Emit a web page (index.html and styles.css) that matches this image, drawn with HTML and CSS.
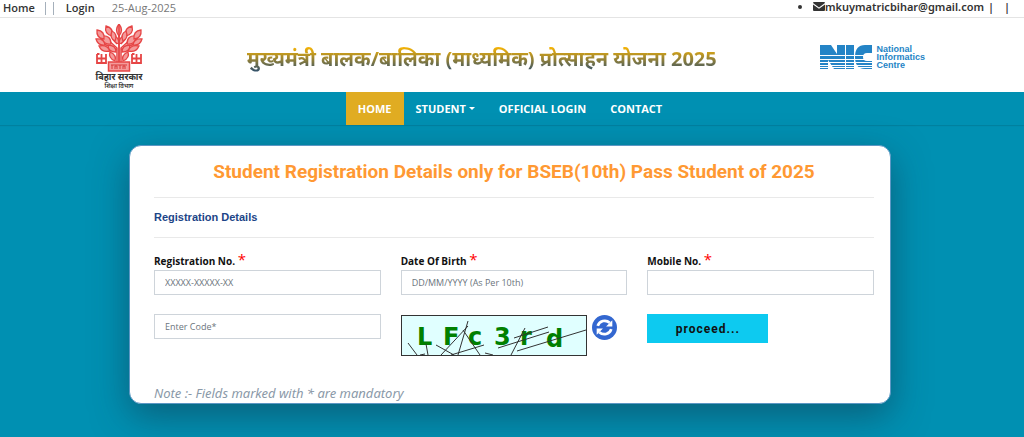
FILE: index.html
```html
<!DOCTYPE html>
<html lang="en">
<head>
    <meta charset="UTF-8">
    <meta name="viewport" content="width=device-width, initial-scale=1.0">
    <title>Student Registration</title>
    <link rel="stylesheet" href="styles.css">
</head>
<body>

    <div class="topbar">
        <div class="top-links">
            <a href="#">Home</a>
            <span class="bars"><i></i><i></i></span>
            <a href="#">Login</a>
            <span class="date">25-Aug-2025</span>
        </div>
        <ul class="top-contact">
            <li>
                <svg class="mail" viewBox="0 0 12 9" aria-hidden="true"><path d="M1 0h10a1 1 0 0 1 1 1L6 5.500 0 1a1 1 0 0 1 1-1z"/><path d="M0 2.400l6 4.300 6-4.300V8a1 1 0 0 1-1 1H1a1 1 0 0 1-1-1z"/></svg><a href="mailto:mkuymatricbihar@gmail.com">mkuymatricbihar@gmail.com</a>
                <span>|</span><span class="last-bar">|</span>
            </li>
        </ul>
    </div>

    <header class="header">
        <div class="emblem" lang="hi">
            <svg viewBox="0 0 48 48" aria-hidden="true">
                <g fill="none" stroke="#e64545" stroke-width="1.500">
                    <path d="M24 38V4M22 38V24L12 15M26 38V24l11-10M22 26L7 19M26 26l15-7M22 20L15 9M26 20l7-12"/>
                </g>
                <g fill="#f49a9a" stroke="#e64545" stroke-width="1.300">
                    <path d="M24 12q-5-6 0-12q5 6 0 12zM24 20q-7-2-6-9q6 2 6 9zM24 20q7-2 6-9q-6 2-6 9z"/>
                    <path d="M17 12q-8-2-6-10q8 2 6 10zM31 12q8-2 6-10q-8 2-6 10zM16 20q-9 1-9-8q9-1 9 8zM32 20q9 1 9-8q-9-1-9 8z"/>
                    <path d="M9 15q-8-1-7-9q8 1 7 9zM39 15q8-1 7-9q-8 1-7 9zM10 21q-7 1-9-6q8-1 9 6zM38 21q7 1 9-6q-8-1-9 6z"/>
                    <path d="M15 27q-8 2-11-5q8-2 11 5zM33 27q8 2 11-5q-8-2-11 5zM20 17q-6-3-3-10q6 3 3 10zM28 17q6-3 3-10q-6 3-3 10z"/>
                    <path d="M21 28q-8 0-8-7q8 0 8 7zM27 28q8 0 8-7q-8 0-8 7zM20 37q-7-3-5-9q7 3 5 9zM28 37q7-3 5-9q-7 3-5 9z"/>
                </g>
                <path d="M24 2v36" stroke="#e64545" stroke-width="1.500"/>
                <path d="M2 30v9h9v-9M2 34.500h9M6.500 30v9M2 30h2.500M8.500 39H11M37 30v9h9v-9M37 34.500h9M41.500 30v9M37 30h2.500M43.500 39H46" fill="none" stroke="#e64545" stroke-width="1.800"/>
                <rect x="13.500" y="38" width="21" height="9" fill="#f49a9a" stroke="#e64545" stroke-width="1.500"/>
                <path d="M16 41h16M17 45v-4M20 45v-3h2v3M25 45v-4M28 45v-3h2v3" fill="none" stroke="#d83838"/>
            </svg>
            <strong>बिहार सरकार</strong>
            <small>शिक्षा विभाग</small>
        </div>
        <h1 lang="hi">मुख्यमंत्री बालक/बालिका (माध्यमिक) प्रोत्साहन योजना 2025</h1>
        <div class="nic">
            <svg viewBox="0 0 52 24" aria-hidden="true">
                <defs>
                    <clipPath id="nicShape">
                        <path d="M0 0h11l6 9V0h8v24H14L8 15v9H0zM26 0h8v24h-8zM52 0v8h-5q-4 0-4 4t4 4h5v8h-7q-10 0-10-12T45 0z"/>
                    </clipPath>
                </defs>
                <g clip-path="url(#nicShape)" fill="#2484c6">
                    <path d="M0 0h52v10H0zM0 11h52v3H0zM0 15h52v2H0zM0 18h52v2H0zM0 21h52v1H0zM0 23h52v1H0z"/>
                </g>
            </svg>
            <span>National<br>Informatics<br>Centre</span>
        </div>
    </header>

    <nav class="navbar">
        <a class="active" href="#">HOME</a>
        <a class="dropdown" href="#">STUDENT</a>
        <a href="#">OFFICIAL LOGIN</a>
        <a href="#">CONTACT</a>
    </nav>

    <main>
        <form class="card">
            <h2>Student Registration Details only for BSEB(10th) Pass Student of 2025</h2>
            <h3>Registration Details</h3>
            <div class="fields">
                <div>
                    <label for="regNo">Registration No. <b>*</b></label>
                    <input id="regNo" type="text" placeholder="XXXXX-XXXXX-XX">
                </div>
                <div>
                    <label for="dob">Date Of Birth <b>*</b></label>
                    <input id="dob" type="text" placeholder="DD/MM/YYYY (As Per 10th)">
                </div>
                <div>
                    <label for="mobile">Mobile No. <b>*</b></label>
                    <input id="mobile" type="text">
                </div>
                <div>
                    <input type="text" placeholder="Enter Code*" aria-label="Enter Code">
                </div>
                <div class="captcha">
                    <svg class="code" viewBox="0 0 184 39">
                        <g class="letters">
                            <text x="15" y="29">L</text>
                            <text x="41" y="29">F</text>
                            <text x="66" y="29">c</text>
                            <text x="92" y="29">3</text>
                            <text x="118" y="29">r</text>
                            <text x="144" y="31">d</text>
                        </g>
                        <g stroke="#333" stroke-width="1" fill="none">
                            <path d="M6 27l9 12M24 28l2 11M34 29l18 10M39 39l27-29M66 5L56 39M61 14l17 25M49 39l33-10M96 32l51-16M123 12l-14 27M112 22l34-11M115 35l69-21M83 37l8 2M18 39l5-1"/>
                        </g>
                    </svg>
                    <button class="refresh" type="button" aria-label="Refresh code">
                        <svg viewBox="0 0 24 24" aria-hidden="true">
                            <circle cx="12" cy="12" r="12" fill="#3367d0"/>
                            <path d="M5.500 10.500A7 7 0 0 1 17 7.500M18.500 13.500A7 7 0 0 1 7 16.500" fill="none" stroke="#fff" stroke-width="2.600"/>
                            <path d="M19.500 5v6h-6zM4.500 19v-6h6z" fill="#fff"/>
                        </svg>
                    </button>
                </div>
                <div>
                    <button class="proceed" type="button">proceed...</button>
                </div>
            </div>
            <p class="note">Note :- Fields marked with * are mandatory</p>
        </form>
    </main>

</body>
</html>
```
FILE: styles.css
```css
* {
    box-sizing: border-box;
}

body {
    margin: 0;
    min-height: 100vh;
    background: #0090b2;
    font-family: 'Open Sans', 'Noto Sans', sans-serif;
    font-size: 11px;
    color: #333;
}

a { color: inherit; text-decoration: none; }

.topbar {
    display: flex;
    justify-content: space-between;
    height: 18px;
    padding: 0 14px 0 3px;
    background: #fff;
    border-bottom: 1px solid #e4e4e4;
    font-weight: 600;
    line-height: 16px;
}

.top-links { display: flex; }
.bars { display: flex; gap: 7px; margin: 2px 12px 0 10px; }
.bars i { width: 1px; height: 13px; background: #a5b0bb; }
.date { margin-left: 17px; font-weight: 400; color: #777; }

.top-contact {
    margin: 0;
    padding: 0;
    font-family: 'Noto Sans', sans-serif;
    line-height: 14px;
}
.top-contact span { margin-left: 1px; }
.top-contact .last-bar { margin-left: 10px; }
.mail { width: 12px; height: 9px; fill: #333; }

.header {
    display: flex;
    align-items: center;
    justify-content: space-between;
    height: 74px;
    padding: 4px 99px 0 95px;
    background: #fff;
}

.emblem {
    display: flex;
    flex-direction: column;
    align-items: center;
    width: 48px;
    white-space: nowrap;
}
.emblem svg { width: 48px; height: 48px; }
.emblem strong { font-size: 9px; line-height: 10px; }
.emblem small { font-size: 6px; line-height: 8px; font-weight: 600; }

h1 {
    margin: 0;
    padding-top: 4px;
    font-size: 20px;
    line-height: 32px;
    font-weight: 700;
    color: transparent;
    background: linear-gradient(#ffb800 20%, #31506b 90%);
    -webkit-background-clip: text;
    background-clip: text;
    white-space: nowrap;
}

.nic { display: flex; gap: 4px; align-items: center; }
.nic svg { width: 52px; height: 24px; }
.nic span {
    font: bold 9px/8px 'Liberation Sans', sans-serif;
    color: #2484c6;
}

.navbar {
    display: flex;
    justify-content: center;
    padding-right: 4px;
    box-shadow: 0 1px 1px rgba(0, 0, 0, 0.1);
    font-size: 11px;
    font-weight: 700;
    line-height: 33px;
    color: #fff;
}
.navbar a { padding: 0 12px; }
.navbar .active { background: #e0ac22; }
.dropdown::after {
    content: "";
    display: inline-block;
    margin-left: 3px;
    vertical-align: 3px;
    border: 3px solid transparent;
    border-top-color: #fff;
    border-bottom: 0;
}

main { padding: 20px 133px 33px 129px; }

.card {
    padding: 15px 16px 0 24px;
    background: #fff;
    border: 1px solid #5c97c4;
    border-radius: 12px;
    box-shadow: 0 12px 36px rgba(20, 50, 70, 0.5);
}

h2 {
    margin: 0;
    padding-bottom: 14px;
    border-bottom: 1px solid #e9e9e9;
    font: bold 19px/22px Roboto, sans-serif;
    text-align: center;
    color: #ff9933;
}

h3 {
    margin: 0;
    border-bottom: 1px solid #e9e9e9;
    font: bold 11px/39px 'Liberation Sans', sans-serif;
    color: #1c4587;
}

.fields {
    display: grid;
    grid-template-columns: repeat(3, 1fr);
    gap: 19px 20px;
    padding-top: 14px;
}

label {
    display: block;
    height: 18px;
    line-height: 17px;
    font-size: 10px;
    font-weight: 700;
    color: #111;
}
label b { font-size: 15px; line-height: 14px; font-weight: 400; color: #f00; }

input {
    display: block;
    width: 100%;
    height: 25px;
    padding: 0 10px;
    border: 1px solid #ced4da;
    background: #fff;
    font: 9px 'Open Sans', 'Noto Sans', sans-serif;
}
input::placeholder { color: #6c757d; }

.captcha { display: flex; align-items: flex-start; gap: 5px; }
.code {
    width: 186px;
    height: 41px;
    margin-top: 1px;
    border: 1px solid #333;
    background: #e0ffff;
}
.letters {
    font: bold 24px 'DejaVu Sans', sans-serif;
    fill: #008000;
}

.refresh { padding: 0; margin-top: 1px; border: 0; background: none; }
.refresh svg { display: block; width: 25px; height: 25px; }

.proceed {
    width: 121px;
    height: 29px;
    border: 0;
    background: #0dcaf0;
    font: bold 12px Roboto, sans-serif;
    letter-spacing: 1px;
    color: #111;
}

.note {
    margin: 27px 0 0;
    font-family: 'Noto Sans', sans-serif;
    font-size: 13px;
    line-height: 20px;
    font-style: italic;
    color: #8a99a8;
}
```
